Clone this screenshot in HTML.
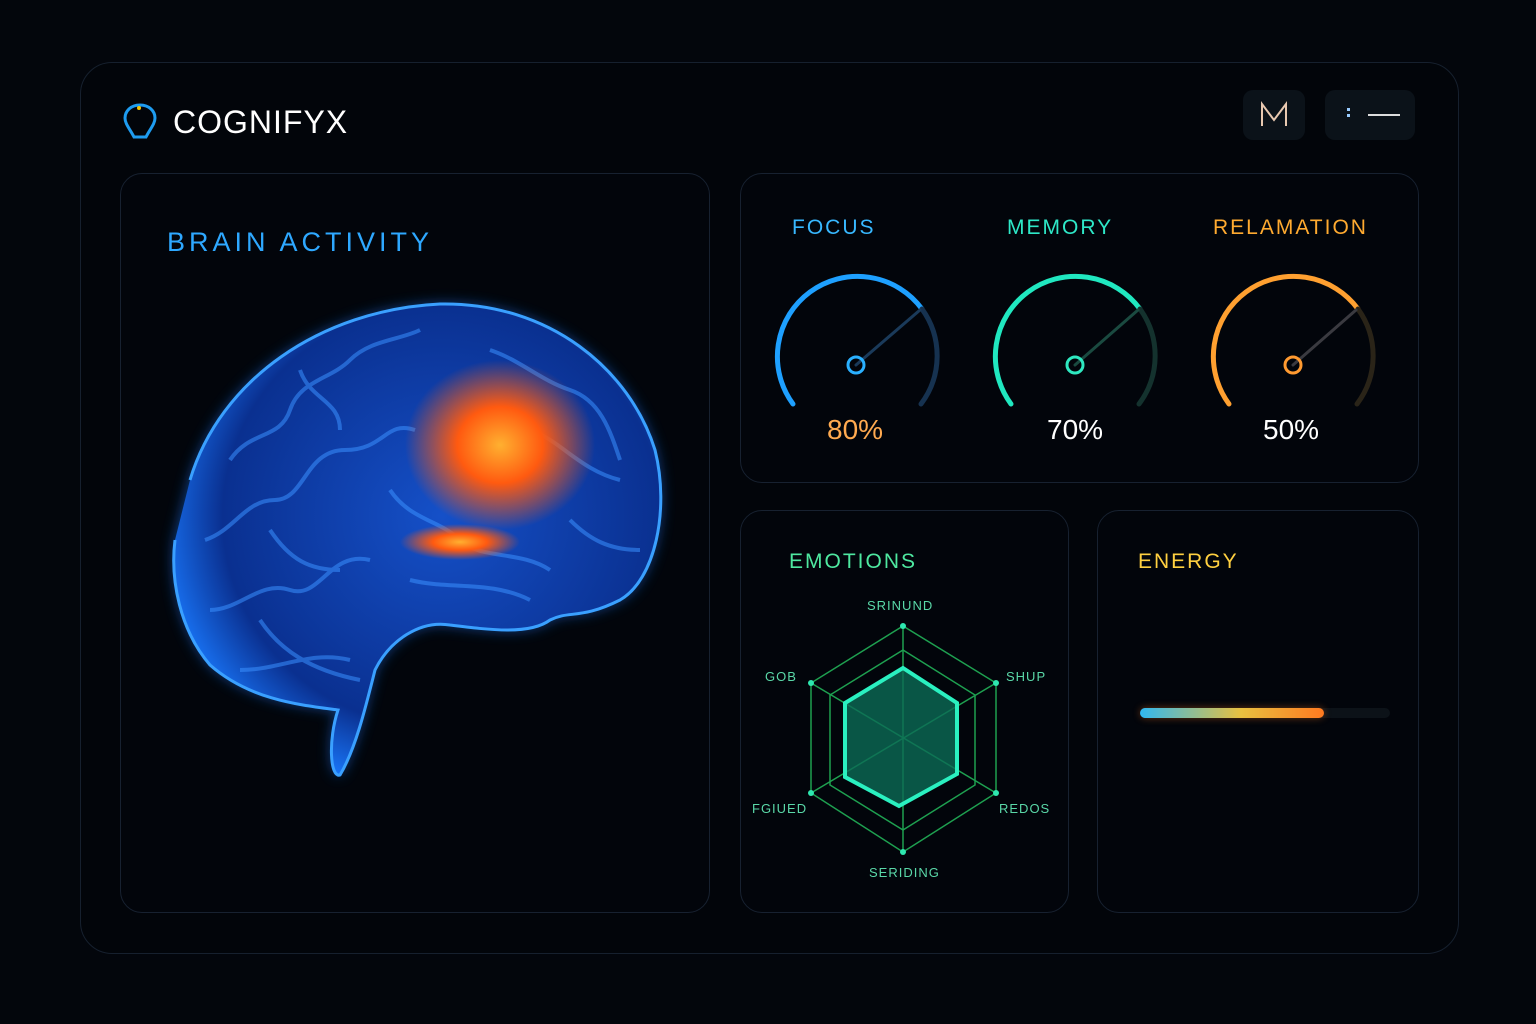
<!DOCTYPE html>
<html><head><meta charset="utf-8"><style>
body{margin:0;width:1536px;height:1024px;background:#03060c;font-family:"Liberation Sans",sans-serif;overflow:hidden;position:relative}
.p{position:absolute;border:1px solid #172130;border-radius:22px;background:#02050b}
.t{position:absolute;font-size:21px;letter-spacing:2px}
</style></head><body>
<div class="p" style="left:80px;top:62px;width:1377px;height:890px;border-radius:32px;background:#02050a;border-color:#16202e"></div>
<div class="p" style="left:120px;top:173px;width:588px;height:738px"></div>
<div class="p" style="left:740px;top:173px;width:677px;height:308px"></div>
<div class="p" style="left:740px;top:510px;width:327px;height:401px"></div>
<div class="p" style="left:1097px;top:510px;width:320px;height:401px"></div>
<svg style="position:absolute;left:122px;top:102px" width="36" height="40" viewBox="0 0 36 40"><path d="M18 3C9 3 3 9 3 16c0 6 5 11 9 19h12c4-8 9-13 9-19 0-7-6-13-15-13z" fill="none" stroke="#1e9cf0" stroke-width="3"/><circle cx="17" cy="6" r="2" fill="#f5c400"/></svg>
<div style="position:absolute;left:173px;top:104px;color:#fff;font-size:32px;letter-spacing:1px">COGNIFYX</div>
<div style="position:absolute;left:1243px;top:90px;width:62px;height:50px;background:#0b1219;border-radius:10px"><svg width="62" height="50"><path d="M19 36V14l12 16 12-16v22" fill="none" stroke="#e8c8b0" stroke-width="2"/></svg></div>
<div style="position:absolute;left:1325px;top:90px;width:90px;height:50px;background:#0b1219;border-radius:10px"><div style="position:absolute;left:22px;top:18px;width:3px;height:3px;background:#9cf;box-shadow:0 6px 0 #9cf"></div><div style="position:absolute;left:43px;top:24px;width:32px;height:2px;background:#ddd"></div></div>
<div class="t" style="left:167px;top:227px;color:#2ea8ff;font-size:27px;letter-spacing:4px">BRAIN ACTIVITY</div>
<svg style="position:absolute;left:150px;top:280px" width="540" height="520">
<defs><radialGradient id="b" cx="55%" cy="45%" r="60%"><stop offset="0" stop-color="#1550c8"/><stop offset=".75" stop-color="#0a3090"/><stop offset="1" stop-color="#1a7aff"/></radialGradient>
<radialGradient id="o" cx="50%" cy="50%" r="50%"><stop offset="0" stop-color="#ffb030"/><stop offset=".45" stop-color="#ff5a10"/><stop offset="1" stop-color="#ff5a10" stop-opacity="0"/></radialGradient>
<filter id="g"><feGaussianBlur stdDeviation="7"/></filter></defs>
<path d="M40 200C70 100 170 30 290 24 400 22 480 90 505 170 520 230 505 300 470 320 430 340 420 330 400 340 380 355 340 350 300 345 270 340 240 360 225 390 215 430 205 470 190 495 180 498 178 460 188 430 150 425 100 420 60 385 30 350 20 300 25 260 40 200z" fill="#1a7aff" opacity=".55" filter="url(#g)"/>
<path d="M40 200C70 100 170 30 290 24 400 22 480 90 505 170 520 230 505 300 470 320 430 340 420 330 400 340 380 355 340 350 300 345 270 340 240 360 225 390 215 430 205 470 190 495 180 498 178 460 188 430 150 425 100 420 60 385 30 350 20 300 25 260 40 200z" fill="url(#b)" stroke="#3aa0ff" stroke-width="3"/>
<g fill="none" stroke="#3a90ff" stroke-width="4" opacity=".55"><path d="M80 180c20-30 50-20 60-50s40-30 60-50 50-20 70-30"/><path d="M55 260c30-10 40-40 70-40s30-50 70-50 40-30 70-20"/><path d="M60 330c30 0 50-30 80-20s40-40 80-30"/><path d="M90 390c40 0 70-20 110-10"/><path d="M340 70c30 10 50 30 80 40s40 40 50 70"/><path d="M380 150c30 10 50 40 90 50"/><path d="M240 210c20 30 50 30 70 50s60 10 90 30"/><path d="M120 250c20 30 40 40 70 40"/><path d="M420 240c20 20 40 30 70 30"/><path d="M150 90c10 30 40 30 40 60"/><path d="M260 300c40 10 80 0 120 20"/><path d="M110 340c20 30 50 50 100 60"/></g>
<ellipse cx="350" cy="165" rx="95" ry="85" fill="url(#o)"/>
<ellipse cx="310" cy="262" rx="60" ry="18" fill="url(#o)"/>
</svg>
<div class="t" style="left:792px;top:216px;color:#38b8ff">FOCUS</div>
<div class="t" style="left:1007px;top:216px;color:#2ee8c8">MEMORY</div>
<div class="t" style="left:1213px;top:216px;color:#ffaa30">RELAMATION</div>
<svg style="position:absolute;left:0;top:0" width="1536" height="1024">
<g fill="none" stroke-linecap="round">
<path d="M793 404A80 80 0 1 1 922 309" stroke="#1ea0ff" stroke-width="5"/><path d="M922 309A80 80 0 0 1 921 404" stroke="#163250" stroke-width="5"/>
<path d="M1011 404A80 80 0 1 1 1140 309" stroke="#20e8c0" stroke-width="5"/><path d="M1140 309A80 80 0 0 1 1139 404" stroke="#14322e" stroke-width="5"/>
<path d="M1229 404A80 80 0 1 1 1358 309" stroke="#ffa030" stroke-width="5"/><path d="M1358 309A80 80 0 0 1 1357 404" stroke="#2a2418" stroke-width="5"/>
<path d="M856 365L920 310" stroke="#1a3a5a" stroke-width="3"/><path d="M1075 365L1138 310" stroke="#1a4a40" stroke-width="3"/><path d="M1293 365L1356 310" stroke="#3a3a40" stroke-width="3"/>
<circle cx="856" cy="365" r="8" stroke="#2ab0ff" stroke-width="3"/><circle cx="1075" cy="365" r="8" stroke="#2ee8c0" stroke-width="3"/><circle cx="1293" cy="365" r="8" stroke="#ff9a30" stroke-width="3"/>
</g>
<g stroke="#1ea050" stroke-width="1.5" fill="none">
<path d="M903 626L996 683 996 793 903 852 811 793 811 683Z"/><path d="M903 650L975 695 975 785 903 830 830 785 830 695Z"/><path d="M903 740V626M903 740V852M811 683L996 793M996 683L811 793"/>
</g>
<path d="M903 668L957 703 957 774 899 806 845 777 845 703Z" fill="#0b6a55" fill-opacity=".8" stroke="#2af0c0" stroke-width="4"/>
<g fill="#2ee8b0"><circle cx="903" cy="626" r="3"/><circle cx="996" cy="683" r="3"/><circle cx="996" cy="793" r="3"/><circle cx="903" cy="852" r="3"/><circle cx="811" cy="793" r="3"/><circle cx="811" cy="683" r="3"/></g>
</svg>
<div style="position:absolute;left:827px;top:414px;color:#ffaa50;font-size:28px">80%</div>
<div style="position:absolute;left:1047px;top:414px;color:#fff;font-size:28px">70%</div>
<div style="position:absolute;left:1263px;top:414px;color:#fff;font-size:28px">50%</div>
<div class="t" style="left:789px;top:550px;color:#4ee8a0">EMOTIONS</div>
<div style="position:absolute;color:#5ad8a8;font-size:13px;letter-spacing:1px">
<span style="position:absolute;left:867px;top:598px">SRINUND</span><span style="position:absolute;left:765px;top:669px">GOB</span><span style="position:absolute;left:1006px;top:669px">SHUP</span><span style="position:absolute;left:752px;top:801px">FGIUED</span><span style="position:absolute;left:999px;top:801px">REDOS</span><span style="position:absolute;left:869px;top:865px">SERIDING</span></div>
<div class="t" style="left:1138px;top:550px;color:#ffd040">ENERGY</div>
<div style="position:absolute;left:1140px;top:708px;width:250px;height:10px;border-radius:5px;background:#0c1218"></div>
<div style="position:absolute;left:1140px;top:708px;width:184px;height:10px;border-radius:5px;background:linear-gradient(90deg,#30b8f0,#e8c040 55%,#ff7a20);box-shadow:0 0 8px #ff7a2066"></div>
</body></html>
